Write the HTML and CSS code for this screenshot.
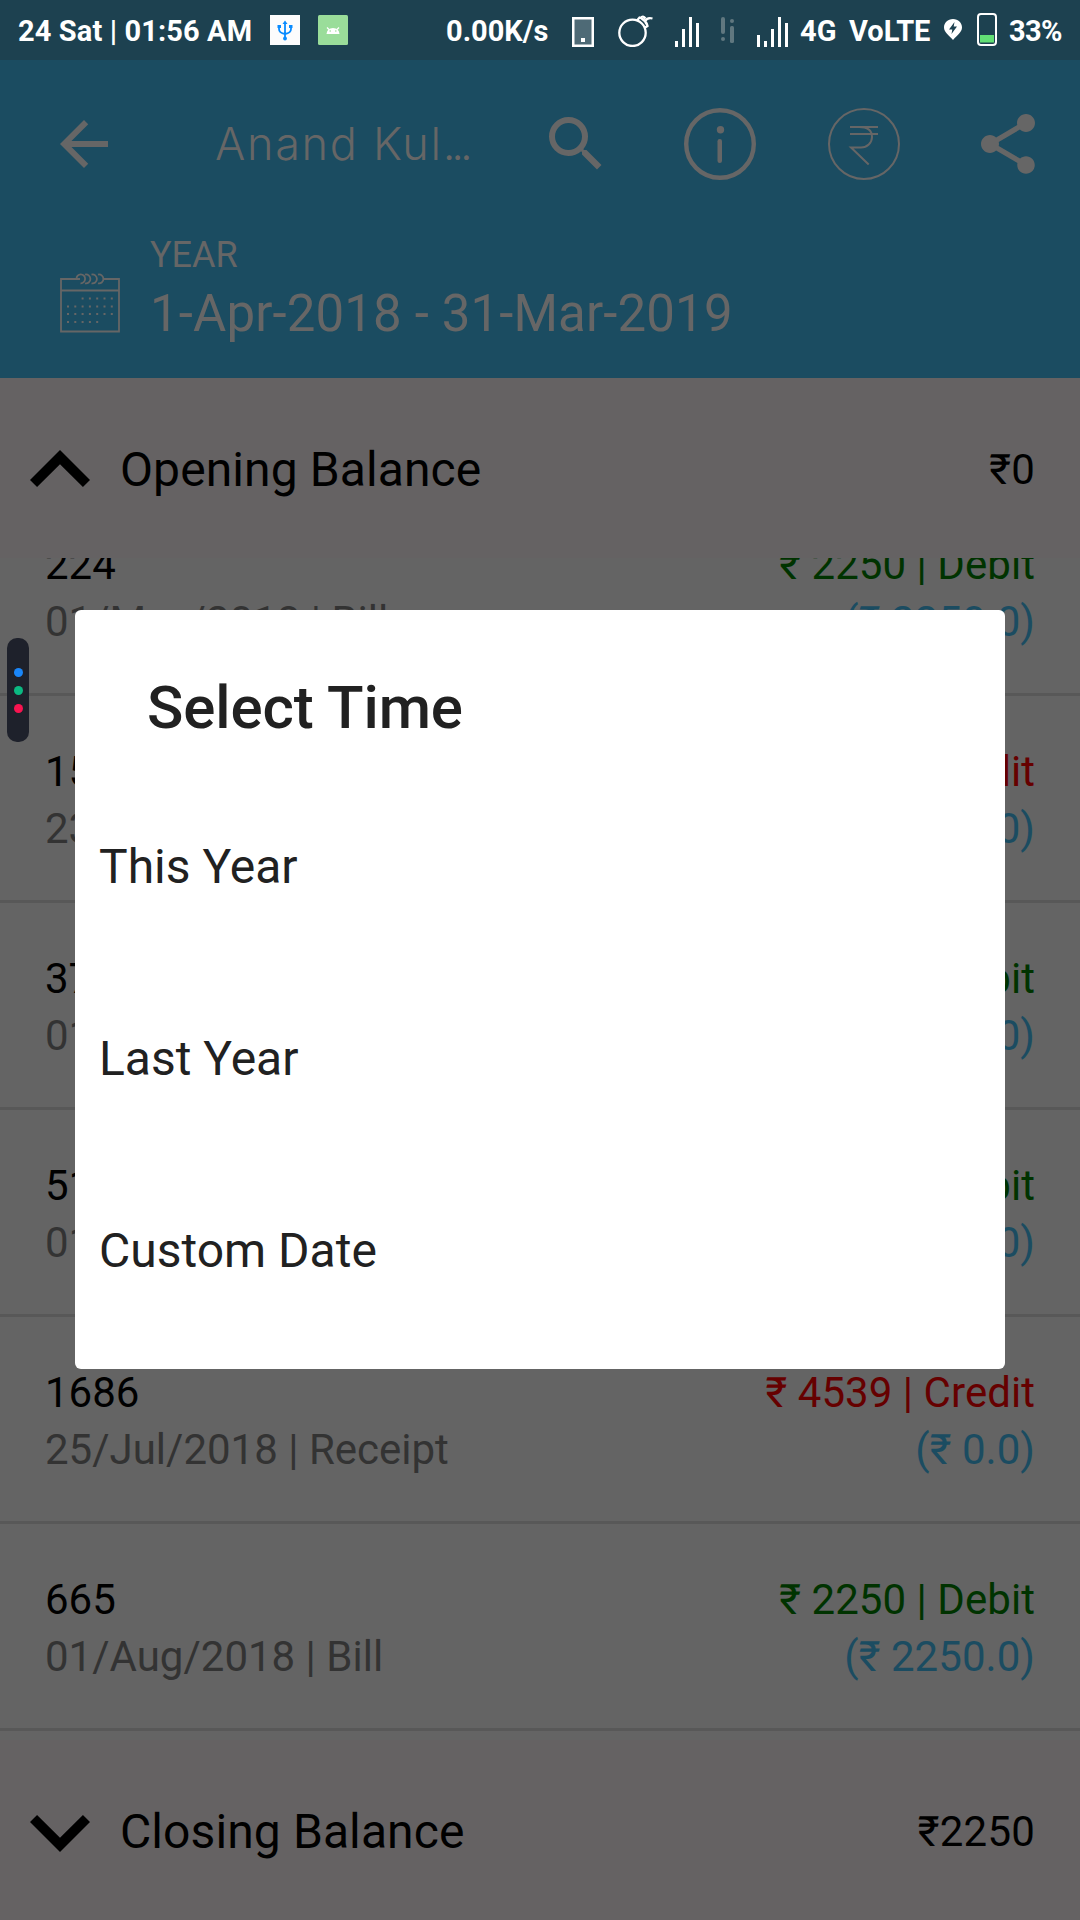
FILE: index.html
```html
<!DOCTYPE html>
<html lang="en">
<head>
<meta charset="utf-8">
<title>Ledger</title>
<link rel="stylesheet" href="styles.css">
</head>
<body>
<div class="screen">
  <div class="status-bar">
    <span class="status-text clock">24 Sat | 01:56 AM</span>
    <svg class="usb" width="30" height="30" viewBox="0 0 30 30"><rect width="30" height="30" fill="#fcfcfc"/><g fill="none" stroke="#0a8cff" stroke-width="1.8"><path d="M15 8v16M9 11v3q0 4 6 5q6-1 6-5v-3"/></g><g fill="#0a8cff"><path d="M15 5.500l2.500 3.500h-5z"/><rect x="7.500" y="10" width="3.500" height="3"/><rect x="19" y="10" width="3.500" height="3"/><circle cx="15" cy="23.500" r="1.900"/></g></svg>
    <svg class="android" width="30" height="30" viewBox="0 0 30 30"><rect width="30" height="30" rx="1.500" fill="#9add9a"/><path d="M9 12.500l2 2M21 12.500l-2 2" stroke="#fff" stroke-width="1.300" fill="none"/><path d="M8.500 19q.5-6 6.500-6t6.500 6z" fill="#fff"/><circle cx="12.200" cy="16" r=".8" fill="#9add9a"/><circle cx="17.800" cy="16" r=".8" fill="#9add9a"/></svg>
    <span class="status-text speed">0.00K/s</span>
    <svg class="phone" width="22" height="30" viewBox="0 0 22 30"><rect x="1.250" y="1.250" width="19.500" height="27.500" fill="#4e6a76" stroke="#fff" stroke-width="2.500"/><rect x="9" y="21" width="4" height="4" fill="#fff"/></svg>
    <svg class="bomb" width="36" height="32" viewBox="0 0 36 32"><g fill="none" stroke="#fff" stroke-width="2.300"><circle cx="14.500" cy="17.800" r="13.200"/><path d="M19 5.500l2.500-3q6.500 2 8 8.500l-3 2M23.500 3.500q3.500 2 5 5.500M22.500 3q2.500-3 5 .5M27 6.500q2-4.500 7.500-3"/></g></svg>
    <svg class="signal-one" width="25" height="30" viewBox="0 0 25 30" fill="#fff"><path d="M0 24h3v6H0zM7 12h3v18H7zM14 0h3v30h-3zM21 6h3v24h-3z"/></svg>
    <svg class="data-idle" width="13" height="26" viewBox="0 0 13 26" fill="#60777f"><rect width="4" height="17" rx="2"/><circle cx="2" cy="22" r="2"/><circle cx="11" cy="4" r="2"/><rect x="9" y="9" width="4" height="17" rx="1.500"/></svg>
    <svg class="signal-two" width="31" height="30" viewBox="0 0 31 30" fill="#fff"><path d="M0 18h3v12H0zM7 24h3v6H7zM14 12h3v18h-3zM21 0h3v30h-3zM28 6h3v24h-3z"/></svg>
    <span class="status-text network">4G</span>
    <span class="status-text volte">VoLTE</span>
    <svg class="location" width="18" height="21" viewBox="0 0 18 21"><path d="M9 0C3.800 0 0 3.800 0 8.500 0 13 5 16.500 9 21c4-4.500 9-8 9-12.500C18 3.800 14.200 0 9 0z" fill="#fff"/><path d="M10.500 3L5 10.500h3.300L7.500 15 13 7.500H9.700z" fill="#1d4150"/></svg>
    <svg class="battery" width="20" height="33" viewBox="0 0 20 33"><rect x="1" y="1" width="18" height="31" rx="3" fill="none" stroke="#fff" stroke-width="2"/><rect x="3" y="22" width="14" height="7.500" fill="#62df75"/></svg>
    <span class="status-text percent">33%</span>
  </div>

  <header class="header">
    <div class="app-bar">
      <svg class="icon" viewBox="0 0 24 24"><path d="M20 11H7.830l5.590-5.590L12 4l-8 8 8 8 1.410-1.410L7.830 13H20v-2z"/></svg>
      <h1 class="title">Anand Kul<span class="ellipsis">...</span></h1>
      <svg class="icon" viewBox="0 0 24 24"><path d="M15.500 14h-.79l-.28-.27A6.471 6.471 0 0 0 16 9.500 6.500 6.500 0 1 0 9.500 16c1.610 0 3.090-.59 4.230-1.570l.27.28v.79l5 4.990L20.490 19l-4.990-5zm-6 0C7.010 14 5 11.990 5 9.500S7.010 5 9.500 5 14 7.010 14 9.500 11.990 14 9.500 14z"/></svg>
      <svg class="icon" viewBox="0 0 72 72"><circle cx="36" cy="36" r="33.800" class="line" stroke-width="4.400"/><circle cx="36.500" cy="21.700" r="3.700"/><rect x="33.500" y="31" width="4.500" height="24" rx="2.200"/></svg>
      <svg class="icon" viewBox="0 0 72 72"><g class="line" stroke-width="2"><circle cx="36" cy="36" r="35"/><path d="M22 19h28M22 26h28M31 19c9 0 13 4 13 10s-5 10.500-11 10.500H23l17.700 17"/></g></svg>
      <svg class="icon" viewBox="0 0 24 24"><path d="M18 16.080c-.76 0-1.440.3-1.960.77L8.910 12.700c.05-.23.09-.46.09-.7s-.04-.47-.09-.7l7.050-4.110c.54.5 1.250.81 2.040.81 1.660 0 3-1.340 3-3s-1.340-3-3-3-3 1.340-3 3c0 .24.040.47.09.7L8.040 9.810C7.500 9.310 6.790 9 6 9c-1.660 0-3 1.340-3 3s1.340 3 3 3c.79 0 1.500-.31 2.040-.81l7.120 4.160c-.05.21-.08.43-.08.65 0 1.610 1.310 2.920 2.920 2.920s2.920-1.310 2.920-2.920-1.310-2.920-2.920-2.920z"/></svg>
    </div>
    <div class="period">
      <svg class="calendar" viewBox="0 0 60 60"><g class="line" stroke-width="1.800"><path d="M20 6H1v52.500h58V6H44M1 17.500h58"/><path d="M16.500 6a4.300 4.500 0 1 1 4 4.300M25 1.600a4.300 4.500 0 1 1 0 8.700M31.500 1.600a4.300 4.500 0 1 1 0 8.700M38 1.600a4.300 4.500 0 1 1 0 8.700"/></g><g class="dots"><path d="M21.600 25.500H53"/><path d="M7 33.500H53"/><path d="M7 41H53"/><path d="M7 49H38.500"/></g></svg>
      <div>
        <div class="period-label">YEAR</div>
        <div class="period-range">1-Apr-2018 - 31-Mar-2019</div>
      </div>
    </div>
  </header>

  <section class="balance">
    <svg class="chevron" viewBox="0 0 24 24"><path d="M7.410 15.410L12 10.830l4.590 4.580L18 14l-6-6-6 6z"/></svg>
    <span class="balance-name">Opening Balance</span>
    <span class="balance-value">₹0</span>
  </section>

  <main class="list">
    <article class="row"><div><div>224</div><div class="date">01/May/2018 | Bill</div></div><div class="amounts"><div class="debit">₹ 2250 | Debit</div><div class="running">(₹ 2250.0)</div></div></article>
    <article class="row"><div><div>15</div><div class="date">23</div></div><div class="amounts"><div class="credit">Credit</div><div class="running">(₹ 0.0)</div></div></article>
    <article class="row"><div><div>37</div><div class="date">01</div></div><div class="amounts"><div class="debit">Debit</div><div class="running">(₹ 0.0)</div></div></article>
    <article class="row"><div><div>51</div><div class="date">01</div></div><div class="amounts"><div class="debit">Debit</div><div class="running">(₹ 0.0)</div></div></article>
    <article class="row"><div><div>1686</div><div class="date">25/Jul/2018 | Receipt</div></div><div class="amounts"><div class="credit">₹ 4539 | Credit</div><div class="running">(₹ 0.0)</div></div></article>
    <article class="row"><div><div>665</div><div class="date">01/Aug/2018 | Bill</div></div><div class="amounts"><div class="debit">₹ 2250 | Debit</div><div class="running">(₹ 2250.0)</div></div></article>
  </main>

  <section class="balance">
    <svg class="chevron" viewBox="0 0 24 24"><path d="M7.410 8.590L12 13.170l4.590-4.580L18 10l-6 6-6-6z"/></svg>
    <span class="balance-name">Closing Balance</span>
    <span class="balance-value">₹2250</span>
  </section>

  <div class="dialog" role="dialog">
    <h2 class="dialog-title">Select Time</h2>
    <div class="option">This Year</div>
    <div class="option">Last Year</div>
    <div class="option">Custom Date</div>
  </div>

  <div class="edge-handle"><i class="dot blue"></i><i class="dot green"></i><i class="dot pink"></i></div>
</div>
</body>
</html>
```
FILE: styles.css
```css
* { box-sizing: border-box; }

body {
  margin: 0;
  font-family: Roboto, "Noto Sans", sans-serif;
}

svg { display: block; flex: none; }

.screen {
  position: relative;
  width: 1080px;
  height: 1920px;
  display: flex;
  flex-direction: column;
  overflow: hidden;
  background: #646464;
  color: #000;
}

/* Status bar */
.status-bar {
  height: 60px;
  flex: none;
  display: flex;
  align-items: flex-start;
  background: #1d4150;
  color: #fff;
}
.status-text {
  flex: none;
  font-size: 29px;
  font-weight: 700;
  line-height: 62px;
  white-space: nowrap;
}
.clock { margin-left: 18px; width: 252px; letter-spacing: 0.12px; }
.usb { margin-top: 15px; }
.android { margin: 15px 0 0 18px; }
.speed { margin-left: 98px; width: 126px; }
.phone { margin-top: 17px; }
.bomb { margin: 15px 0 0 24px; }
.signal-one { margin: 17px 0 0 21px; }
.data-idle { margin: 17px 0 0 21px; }
.signal-two { margin: 17px 0 0 23px; }
.network { margin-left: 12px; width: 49px; }
.volte { width: 95px; }
.location { margin-top: 19px; }
.battery { margin: 13px 0 0 15px; }
.percent { margin-left: 12px; letter-spacing: -0.6px; }

/* Header */
.header {
  height: 318px;
  flex: none;
  background: #1b4c61;
  color: #666;
}
.app-bar {
  height: 168px;
  padding: 0 36px 0 48px;
  display: flex;
  align-items: center;
  gap: 72px;
}
.icon { width: 72px; height: 72px; fill: #666; }
.line { fill: none; stroke: #666; }
.title {
  flex: 1;
  min-width: 0;
  margin: 0 0 0 23px;
  font: 300 45px/60px Inter, sans-serif;
  letter-spacing: 1.7px;
  white-space: nowrap;
}
.ellipsis { letter-spacing: -4px; }
.period {
  display: flex;
  gap: 30px;
  padding: 5px 60px 0;
}
.calendar { width: 60px; height: 60px; margin-top: 40px; }
.dots { fill: none; stroke: #666; stroke-width: 2; stroke-dasharray: 2 5.3; }
.period-label { font-size: 36px; line-height: 44px; }
.period-range { margin-top: 7px; font-size: 51px; line-height: 60px; letter-spacing: 0.12px; white-space: nowrap; }

/* Opening and closing totals */
.balance {
  height: 180px;
  flex: none;
  display: flex;
  align-items: center;
  padding: 3px 45px 0 0;
  background: #656263;
}
.chevron { width: 120px; height: 120px; }
.balance-name { flex: 1; font-size: 48px; line-height: 60px; letter-spacing: 0.1px; }
.balance-value { font-size: 42px; line-height: 60px; letter-spacing: 0.2px; }

/* Transactions, scrolled partly under the opening total */
.list { height: 1182px; flex: none; overflow: hidden; }
.row {
  display: flex;
  justify-content: space-between;
  height: 207px;
  padding: 47px 45px 0;
  border-bottom: 3px solid #585858;
  font-size: 42px;
  line-height: 57px;
  white-space: nowrap;
}
.row:first-child { margin-top: -69px; }
.amounts { text-align: right; letter-spacing: 0.05px; }
.date { color: #333; }
.debit { color: #003300; }
.credit { color: #660000; }
.running { color: #1b4c61; }

/* Dialog */
.dialog {
  position: absolute;
  left: 75px;
  top: 610px;
  width: 930px;
  height: 759px;
  padding-top: 62px;
  border-radius: 6px;
  background: #fff;
  color: #212121;
}
.dialog-title {
  margin: 0 0 27px;
  padding-left: 72px;
  font-size: 60px;
  font-weight: 500;
  line-height: 72px;
  letter-spacing: -0.1px;
}
.option { padding-left: 24px; font-size: 48px; line-height: 192px; }

.edge-handle {
  position: absolute;
  left: 7px;
  top: 638px;
  width: 22px;
  height: 104px;
  border-radius: 10px;
  background: #1e212b;
  display: flex;
  flex-direction: column;
  align-items: center;
  justify-content: center;
  gap: 9px;
}
.dot { width: 9px; height: 9px; border-radius: 50%; }
.blue { background: #1a86f8; }
.green { background: #0bb982; }
.pink { background: #f81450; }
```
